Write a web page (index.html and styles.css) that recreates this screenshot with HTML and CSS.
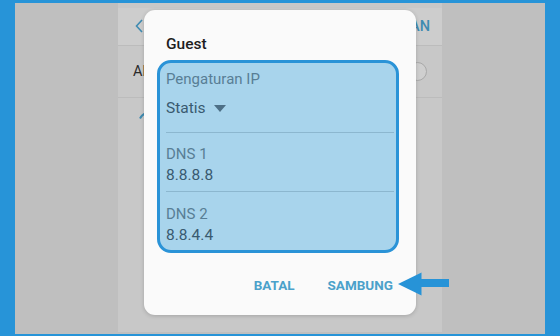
FILE: index.html
```html
<!DOCTYPE html>
<html lang="id">
<head>
  <title>Guest - Pengaturan IP</title>
  <meta charset="UTF-8">
  <meta name="viewport" content="width=device-width, initial-scale=1">

  <link rel="stylesheet" href="styles.css">
</head>
<body>

  <div class="screen">
    <div class="side"></div>

    <div class="panel">
      <div class="panel-head">
        <svg class="back" width="8" height="14" viewBox="0 0 8 14">
          <path d="M7 1 L1.5 7 L7 13" fill="none" stroke="#3f8bb1" stroke-width="1.6"/>
        </svg>
        <span class="save">SIMPAN</span>
      </div>
      <div class="panel-row">
        <span class="row-label">Al</span>
        <span class="knob"></span>
      </div>
      <div class="panel-row last">
        <svg class="wifi" width="14" height="12" viewBox="0 0 14 12">
          <path d="M2 7.5 Q4 3.5 7.5 2.5" fill="none" stroke="#3f8bb1" stroke-width="2"/>
        </svg>
      </div>
    </div>

    <div class="side"></div>

    <!-- dialog over the settings list -->
    <div class="dialog">
      <div class="dialog-title">Guest</div>

      <div class="ip-box">
        <div class="ip-section first">
          <div class="field-label">Pengaturan IP</div>
          <div class="field-select">
            <span>Statis</span>
            <span class="caret"></span>
          </div>
        </div>
        <div class="ip-section">
          <div class="field-label">DNS 1</div>
          <div class="field-value">8.8.8.8</div>
        </div>
        <div class="ip-section end">
          <div class="field-label">DNS 2</div>
          <div class="field-value">8.8.4.4</div>
        </div>
      </div>

      <div class="dialog-actions">
        <span class="btn">BATAL</span>
        <span class="btn">SAMBUNG</span>
      </div>
    </div>

    <svg class="pointer" width="54" height="28" viewBox="0 0 54 28">
      <polygon points="2,14 25.5,2.5 25.5,25.5" fill="#2793d7"/>
      <rect x="25" y="9" width="28" height="8" fill="#2793d7"/>
    </svg>
  </div>

</body>
</html>
```

FILE: styles.css
```css
* {
  box-sizing: border-box;
}

body {
  margin: 0;
  font-family: Roboto, "Liberation Sans", Arial, sans-serif;
  background-color: #2794d8;
}

.screen {
  position: relative;
  width: 560px;
  height: 336px;
  display: flex;
  border-style: solid;
  border-color: #2794d8;
  border-width: 3px 15px 2px 15px;
  background-color: #bfbfbf;
  overflow: hidden;
}

.side {
  width: 103px;
  background-color: #bfbfbf;
}

.panel {
  width: 324px;
  padding-top: 5px;
  background-color: #c8c8c8;
  margin-bottom: 2px;
}

.panel-head {
  height: 38px;
  display: flex;
  align-items: center;
  justify-content: space-between;
  padding: 0 12px 0 17px;
  background-color: #cdcdcd;
  border-bottom: 1px solid #bcbcbc;
}

.back {
  display: block;
  margin-top: -2px;
}

.save {
  font-size: 14.5px;
  font-weight: 500;
  color: #3f8bb1;
}

.panel-row {
  height: 52px;
  display: flex;
  align-items: center;
  justify-content: space-between;
  padding: 0 15px 0 15px;
  border-bottom: 1px solid #bcbcbc;
}

.panel-row.last {
  border-bottom: none;
  align-items: flex-start;
  padding-top: 13px;
  padding-left: 20px;
}

.row-label {
  font-size: 14.5px;
  color: #2b2b2b;
}

.knob {
  width: 19px;
  height: 19px;
  border-radius: 50%;
  border: 1px solid #a9a9a9;
  background-color: #cfcfcf;
}

.dialog {
  position: absolute;
  left: 129px;
  top: 7px;
  width: 272px;
  padding: 24px 17px 22px 13px;
  background-color: #fafafa;
  border-radius: 11px;
  box-shadow: 0 1px 4px rgba(0, 0, 0, 0.18);
}

.dialog-title {
  margin-left: 9px;
  font-size: 15.5px;
  line-height: 20px;
  font-weight: 500;
  color: #1e1e1e;
  margin-bottom: 6px;
}

.ip-box {
  background-color: #a8d4ec;
  border: 3px solid #2a93d7;
  border-radius: 14px;
  padding: 0 2px 0 6px;
}

.ip-section {
  padding: 11px 0 5px;
  border-bottom: 1px solid #8cb7cf;
}

.ip-section.first {
  padding: 7px 0 15px;
}

.ip-section.end {
  padding: 12px 0 4px;
  border-bottom: none;
}

.field-label {
  font-size: 15px;
  line-height: 21px;
  color: #587e95;
}

.first .field-label {
  line-height: 18px;
}

.field-select {
  display: flex;
  align-items: center;
  gap: 8px;
  margin-top: 11px;
  font-size: 15.5px;
  line-height: 18px;
  color: #395a70;
}

.caret {
  width: 0;
  height: 0;
  border-left: 6px solid transparent;
  border-right: 6px solid transparent;
  border-top: 7px solid #4d6f86;
  margin-top: 1px;
}

.field-value {
  font-size: 15.5px;
  line-height: 21px;
  color: #395a70;
}

.dialog-actions {
  display: flex;
  justify-content: flex-end;
  gap: 33px;
  margin-top: 24px;
  padding-right: 6px;
}

.btn {
  font-size: 13.5px;
  line-height: 16px;
  font-weight: 700;
  color: #4ba1ca;
}

.pointer {
  position: absolute;
  left: 381px;
  top: 267px;
}
```
